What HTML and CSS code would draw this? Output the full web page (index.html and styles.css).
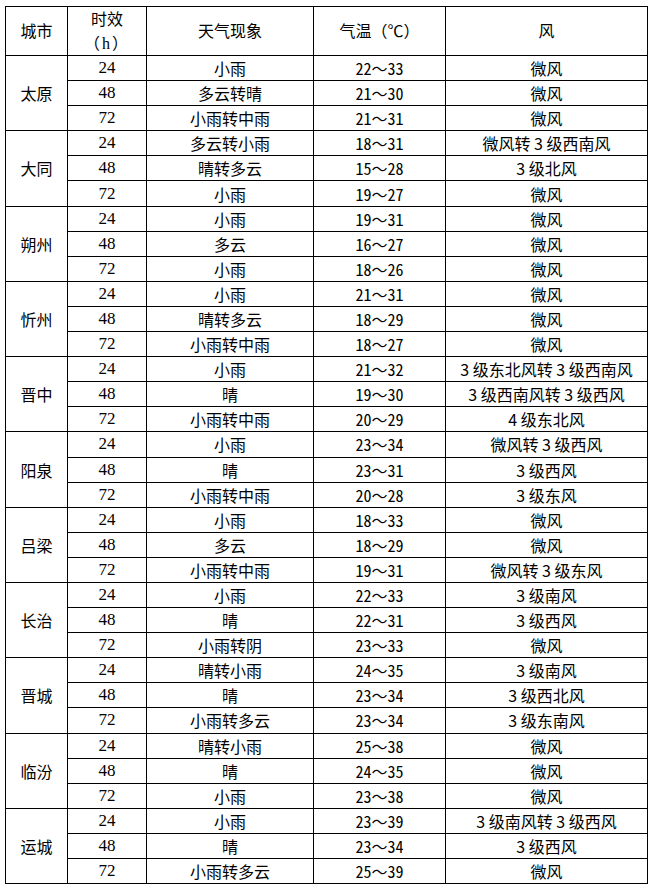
FILE: index.html
```html
<!DOCTYPE html>
<html lang="zh-CN">
<head>
<meta charset="utf-8">
<title>天气预报</title>
<link rel="stylesheet" href="styles.css">
</head>
<body>
<div class="wrap">
<table class="fc">
<colgroup>
<col class="c-city"><col class="c-h"><col class="c-wx"><col class="c-t"><col class="c-w">
</colgroup>
<thead>
<tr class="head">
<th>城市</th><th>时效<br><span class="paren">（<span class="num">h</span>）</span></th><th>天气现象</th><th>气温（℃）</th><th>风</th>
</tr>
</thead>
<tbody>
<tr><td rowspan="3" class="city">太原</td><td class="num">24</td><td>小雨</td><td class="tmp">22～33</td><td>微风</td></tr>
<tr><td class="num">48</td><td>多云转晴</td><td class="tmp">21～30</td><td>微风</td></tr>
<tr><td class="num">72</td><td>小雨转中雨</td><td class="tmp">21～31</td><td>微风</td></tr>

<tr><td rowspan="3" class="city">大同</td><td class="num">24</td><td>多云转小雨</td><td class="tmp">18～31</td><td>微风转 3 级西南风</td></tr>
<tr><td class="num">48</td><td>晴转多云</td><td class="tmp">15～28</td><td>3 级北风</td></tr>
<tr><td class="num">72</td><td>小雨</td><td class="tmp">19～27</td><td>微风</td></tr>

<tr><td rowspan="3" class="city">朔州</td><td class="num">24</td><td>小雨</td><td class="tmp">19～31</td><td>微风</td></tr>
<tr><td class="num">48</td><td>多云</td><td class="tmp">16～27</td><td>微风</td></tr>
<tr><td class="num">72</td><td>小雨</td><td class="tmp">18～26</td><td>微风</td></tr>

<tr><td rowspan="3" class="city">忻州</td><td class="num">24</td><td>小雨</td><td class="tmp">21～31</td><td>微风</td></tr>
<tr><td class="num">48</td><td>晴转多云</td><td class="tmp">18～29</td><td>微风</td></tr>
<tr><td class="num">72</td><td>小雨转中雨</td><td class="tmp">18～27</td><td>微风</td></tr>

<tr><td rowspan="3" class="city">晋中</td><td class="num">24</td><td>小雨</td><td class="tmp">21～32</td><td>3 级东北风转 3 级西南风</td></tr>
<tr><td class="num">48</td><td>晴</td><td class="tmp">19～30</td><td>3 级西南风转 3 级西风</td></tr>
<tr><td class="num">72</td><td>小雨转中雨</td><td class="tmp">20～29</td><td>4 级东北风</td></tr>

<tr><td rowspan="3" class="city">阳泉</td><td class="num">24</td><td>小雨</td><td class="tmp">23～34</td><td>微风转 3 级西风</td></tr>
<tr><td class="num">48</td><td>晴</td><td class="tmp">23～31</td><td>3 级西风</td></tr>
<tr><td class="num">72</td><td>小雨转中雨</td><td class="tmp">20～28</td><td>3 级东风</td></tr>

<tr><td rowspan="3" class="city">吕梁</td><td class="num">24</td><td>小雨</td><td class="tmp">18～33</td><td>微风</td></tr>
<tr><td class="num">48</td><td>多云</td><td class="tmp">18～29</td><td>微风</td></tr>
<tr><td class="num">72</td><td>小雨转中雨</td><td class="tmp">19～31</td><td>微风转 3 级东风</td></tr>

<tr><td rowspan="3" class="city">长治</td><td class="num">24</td><td>小雨</td><td class="tmp">22～33</td><td>3 级南风</td></tr>
<tr><td class="num">48</td><td>晴</td><td class="tmp">22～31</td><td>3 级西风</td></tr>
<tr><td class="num">72</td><td>小雨转阴</td><td class="tmp">23～33</td><td>微风</td></tr>

<tr><td rowspan="3" class="city">晋城</td><td class="num">24</td><td>晴转小雨</td><td class="tmp">24～35</td><td>3 级南风</td></tr>
<tr><td class="num">48</td><td>晴</td><td class="tmp">23～34</td><td>3 级西北风</td></tr>
<tr><td class="num">72</td><td>小雨转多云</td><td class="tmp">23～34</td><td>3 级东南风</td></tr>

<tr><td rowspan="3" class="city">临汾</td><td class="num">24</td><td>晴转小雨</td><td class="tmp">25～38</td><td>微风</td></tr>
<tr><td class="num">48</td><td>晴</td><td class="tmp">24～35</td><td>微风</td></tr>
<tr><td class="num">72</td><td>小雨</td><td class="tmp">23～38</td><td>微风</td></tr>

<tr><td rowspan="3" class="city">运城</td><td class="num">24</td><td>小雨</td><td class="tmp">23～39</td><td>3 级南风转 3 级西风</td></tr>
<tr><td class="num">48</td><td>晴</td><td class="tmp">23～34</td><td>3 级西风</td></tr>
<tr><td class="num">72</td><td>小雨转多云</td><td class="tmp">25～39</td><td>微风</td></tr>
</tbody>
</table>
</div>
</body>
</html>
```

FILE: styles.css
```css
html, body {
  margin: 0;
  padding: 0;
  background: #fff;
}

.wrap {
  padding: 6px 0 0 5px;
}

.fc {
  border-collapse: collapse;
  table-layout: fixed;
  width: 642px;
  font-family: "Noto Sans CJK SC", "Noto Sans", sans-serif;
  font-size: 16px;
  color: #000;
}

.c-city { width: 62px; }
.c-h { width: 79px; }
.c-wx { width: 167px; }
.c-t { width: 132px; }
.c-w { width: 202px; }

.fc th,
.fc td {
  border: 1px solid #000;
  padding: 0;
  text-align: center;
  vertical-align: middle;
  font-weight: 400;
  line-height: 24px;
  white-space: nowrap;
}

.fc .head th {
  height: 47px;
  line-height: 23.5px;
}

.fc .paren {
  letter-spacing: 2px;
}

.fc tbody tr {
  height: 25.1px;
}

.fc td {
  line-height: 22px;
}

.fc .num {
  font-family: "Liberation Serif", "Times New Roman", serif;
  font-size: 17px;
}

.fc .paren .num {
  font-size: 16px;
}

.fc .tmp {
  font-family: "Noto Sans Mono CJK SC", "DejaVu Sans Mono", monospace;
}
```
